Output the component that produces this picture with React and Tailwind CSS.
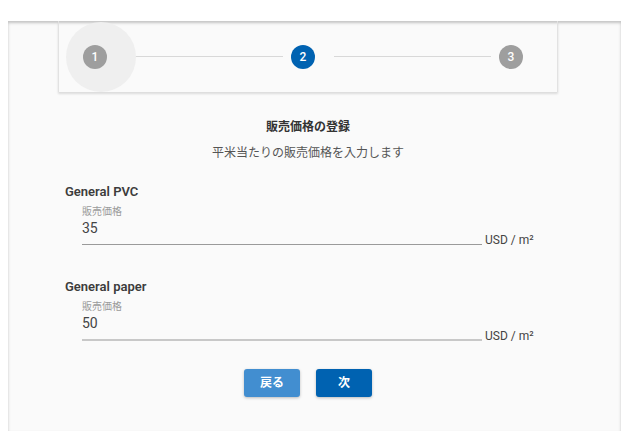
import React from 'react'

// Price registration step of a three-step wizard.
const font = { fontFamily: 'Roboto, "Noto Sans CJK JP", sans-serif' }

const products = [
  { name: 'General PVC', value: '35', line: 'border-b border-[#9a9a9a]' },
  { name: 'General paper', value: '50', line: 'border-b-2 border-[#c8c8c8]' },
]

function StepDot({ n, active }) {
  return (
    <div
      className={`flex h-[24px] w-[24px] shrink-0 items-center justify-center rounded-full text-[12px] font-medium leading-none text-white ${
        active ? 'bg-[#0062b1]' : 'bg-[#9e9e9e]'
      }`}
    >
      {n}
    </div>
  )
}

function Stepper() {
  return (
    <div className="flex h-[71px] items-center border-x border-[#e2e2e2] pl-[24px] shadow-[0_2px_2px_rgba(0,0,0,0.12)]">
      <div className="relative">
        <div className="absolute left-[-17px] top-[-23px] h-[70px] w-[70px] rounded-full bg-[#efefef]" />
        <div className="relative">
          <StepDot n="1" />
        </div>
      </div>
      <div className="ml-[20px] h-px w-[156px] bg-[#d8d8d8]" />
      <div className="ml-[8px]">
        <StepDot n="2" active />
      </div>
      <div className="ml-[19px] h-px w-[157px] bg-[#d8d8d8]" />
      <div className="ml-[8px]">
        <StepDot n="3" />
      </div>
    </div>
  )
}

function PriceField({ product }) {
  return (
    <div>
      <p className="pl-[7px] text-[13px] font-semibold leading-[16px] text-[#3c3c3c]">{product.name}</p>
      <div className="mt-[6px] flex items-end pl-[24px]">
        <div className={`w-[400px] pb-[6px] ${product.line}`}>
          <p className="text-[10px] leading-[12px] text-[#9b9b9b]">販売価格</p>
          <p className="text-[14px] leading-[20px] text-[#444]">{product.value}</p>
        </div>
        <span className="mb-[-2px] ml-[3px] text-[12px] leading-[14px] text-[#444]">USD / m²</span>
      </div>
    </div>
  )
}

export default function App() {
  return (
    <div className="min-h-[436px] bg-white pt-[21px]" style={font}>
      <div className="ml-[8px] mr-[5px] h-[410px] bg-[#fafafa] shadow-[inset_0_2px_3px_rgba(0,0,0,0.22)]">
        <div className="ml-[50px] w-[500px]">
          <Stepper />

          <h2 className="mt-[25px] text-center text-[12px] font-bold leading-[20px] text-[#333]">販売価格の登録</h2>
          <p className="mt-[6px] text-center text-[12px] leading-[20px] text-[#555]">平米当たりの販売価格を入力します</p>

          <div className="mt-[21px] flex flex-col gap-[34px]">
            {products.map((product) => (
              <PriceField key={product.name} product={product} />
            ))}
          </div>

          <div className="mt-[28px] flex justify-center gap-[16px]">
            <button className="h-[28px] w-[56px] rounded-[3px] bg-[#428ed0] text-[12px] font-bold text-white shadow-[0_1px_3px_rgba(0,0,0,0.25)]">
              戻る
            </button>
            <button className="h-[28px] w-[56px] rounded-[3px] bg-[#0062b1] text-[12px] font-bold text-white shadow-[0_1px_3px_rgba(0,0,0,0.25)]">
              次
            </button>
          </div>
        </div>
      </div>
    </div>
  )
}
